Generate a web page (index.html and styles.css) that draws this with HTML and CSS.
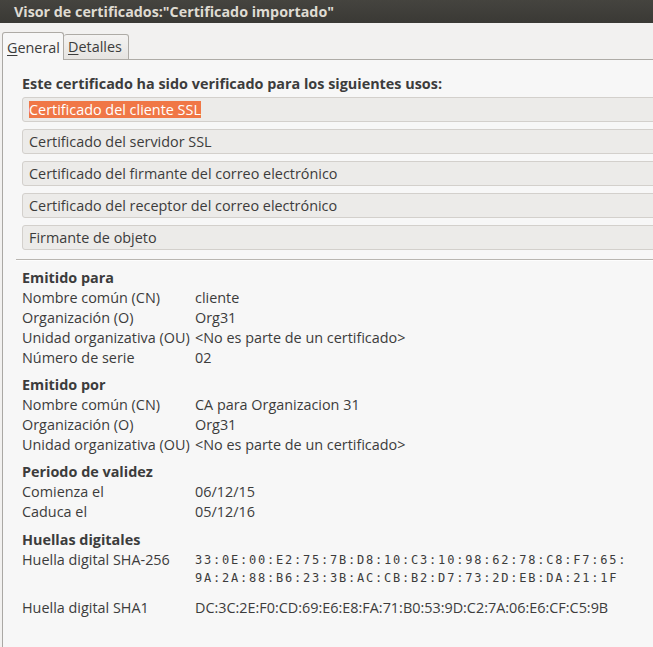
FILE: index.html
```html
<!DOCTYPE html>
<html lang="es">
<head>
<meta charset="utf-8">
<title>Visor de certificados</title>
<link rel="stylesheet" href="styles.css">
</head>
<body>
<div class="window">
  <div class="titlebar"><span class="title">Visor de certificados:"Certificado importado"</span></div>
  <div class="tabs">
    <div class="tab active"><u>G</u>eneral</div>
    <div class="tab"><u>D</u>etalles</div>
    <div class="tab-fill"></div>
  </div>
  <div class="page">
    <div class="heading">Este certificado ha sido verificado para los siguientes usos:</div>
    <div class="uses">
      <div class="use"><span class="selected">Certificado del cliente SSL</span></div>
      <div class="use">Certificado del servidor SSL</div>
      <div class="use">Certificado del firmante del correo electrónico</div>
      <div class="use">Certificado del receptor del correo electrónico</div>
      <div class="use">Firmante de objeto</div>
    </div>
    <div class="separator"></div>

    <div class="section">
      <div class="heading">Emitido para</div>
      <div class="grid">
        <div class="label">Nombre común (CN)</div><div class="value">cliente</div>
        <div class="label">Organización (O)</div><div class="value">Org31</div>
        <div class="label">Unidad organizativa (OU)</div><div class="value">&lt;No es parte de un certificado&gt;</div>
        <div class="label">Número de serie</div><div class="value">02</div>
      </div>
    </div>

    <div class="section">
      <div class="heading">Emitido por</div>
      <div class="grid">
        <div class="label">Nombre común (CN)</div><div class="value">CA para Organizacion 31</div>
        <div class="label">Organización (O)</div><div class="value">Org31</div>
        <div class="label">Unidad organizativa (OU)</div><div class="value">&lt;No es parte de un certificado&gt;</div>
      </div>
    </div>

    <div class="section">
      <div class="heading">Periodo de validez</div>
      <div class="grid">
        <div class="label">Comienza el</div><div class="value">06/12/15</div>
        <div class="label">Caduca el</div><div class="value">05/12/16</div>
      </div>
    </div>

    <div class="section">
      <div class="heading">Huellas digitales</div>
      <div class="grid">
        <div class="label">Huella digital SHA-256</div>
        <div class="value mono">33:0E:00:E2:75:7B:D8:10:C3:10:98:62:78:C8:F7:65:<br>9A:2A:88:B6:23:3B:AC:CB:B2:D7:73:2D:EB:DA:21:1F</div>
        <div class="label sha1">Huella digital SHA1</div>
        <div class="value sha1">DC:3C:2E:F0:CD:69:E6:E8:FA:71:B0:53:9D:C2:7A:06:E6:CF:C5:9B</div>
      </div>
    </div>
  </div>
</div>
</body>
</html>
```
FILE: styles.css
```css
html, body {
  margin: 0;
  padding: 0;
}
body {
  width: 653px;
  height: 647px;
  overflow: hidden;
  background: #f2f1f0;
  font-family: "Open Sans", "Noto Sans", sans-serif;
  font-size: 14.4px;
  color: #3c3c3c;
}
.window {
  display: flex;
  flex-direction: column;
  height: 647px;
}
.titlebar {
  height: 23px;
  flex: none;
  background: linear-gradient(#45443f, #3a3935);
  display: flex;
  align-items: center;
  padding-left: 14px;
}
.title {
  color: #dfdbd2;
  font-weight: 700;
  font-size: 14.3px;
  line-height: 20px;
  white-space: nowrap;
}
.tabs {
  height: 37px;
  flex: none;
  display: flex;
  align-items: flex-end;
  padding-left: 2px;
}
.tab {
  box-sizing: border-box;
  height: 26px;
  padding: 0 5px 0 4px;
  border: 1px solid #aeaba6;
  border-radius: 3px 3px 0 0;
  background: linear-gradient(#f4f3f2, #e6e4e1);
  line-height: 24px;
  white-space: nowrap;
}
.tab.active {
  height: 28px;
  width: 62px;
  padding-left: 4px;
  border-bottom: none;
  background: #f7f7f7;
  line-height: 29px;
}
.tab + .tab {
  border-left: none;
  width: 65px;
}
.tab u {
  text-decoration-thickness: 1px;
  text-underline-offset: 2px;
}
.tab-fill {
  flex: 1;
  align-self: stretch;
  border-bottom: 1px solid #aeaba6;
}
.page {
  flex: 1;
  margin-left: 2px;
  border-left: 1px solid #aaa8a4;
  background: #f7f7f7;
  padding: 14px 0 0 19px;
  min-width: 0;
}
.heading {
  font-weight: 700;
  line-height: 20px;
  white-space: nowrap;
}
.uses {
  margin-top: 3px;
  margin-right: -12px;
  display: flex;
  flex-direction: column;
  gap: 7px;
}
.use {
  box-sizing: border-box;
  height: 25px;
  border: 1px solid #d3d0cc;
  border-radius: 3px;
  background: #ecebe9;
  padding-left: 6px;
  line-height: 23px;
  white-space: nowrap;
}
.selected {
  background: #f07746;
  color: #ffffff;
  padding: 1px 0;
  line-height: 15px;
  display: inline-block;
}
.separator {
  margin: 9px 0 8px -6px;
  height: 1px;
  background: #b9b6b1;
  box-shadow: 0 1px 0 #fdfdfd;
}
.section + .section {
  margin-top: 7px;
}
.section:last-child {
  margin-top: 8px;
}
.grid {
  display: grid;
  grid-template-columns: 173px auto;
  line-height: 20px;
  white-space: nowrap;
}
.mono {
  font-family: "DejaVu Sans Mono", monospace;
  font-size: 12px;
  letter-spacing: 1.78px;
  line-height: 18px;
  padding-top: 1px;
}
.sha1 {
  margin-top: 11px;
}
```
